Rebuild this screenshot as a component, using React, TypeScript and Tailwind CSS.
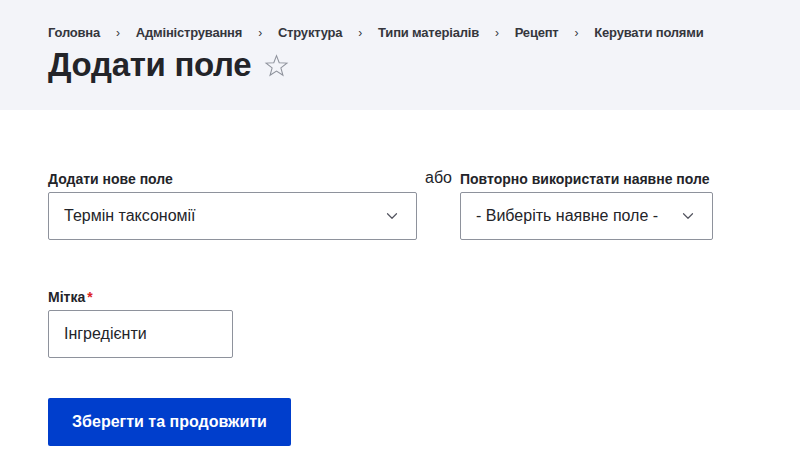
import { ChevronDown } from "lucide-react";

const crumbs = ["Головна", "Адміністрування", "Структура", "Типи матеріалів", "Рецепт", "Керувати полями"];
const font = { fontFamily: '"Liberation Sans", Arial, sans-serif' };

function Select({ value, width }: { value: string; width: string }) {
  return (
    <div className={`flex h-12 items-center justify-between rounded-[2px] border border-[#8e929c] bg-white pl-[15px] pr-[15px] text-base text-[#232429] ${width}`}>
      <span>{value}</span>
      <ChevronDown className="h-[18px] w-[18px] text-[#545560]" strokeWidth={1.6} />
    </div>
  );
}

function Label({ children, required = false }: { children: string; required?: boolean }) {
  return (
    <p className="mb-1 text-sm leading-[18px] font-bold text-[#232429]">
      {children}
      {required && <span className="ml-0.5 text-[#dc2323]">*</span>}
    </p>
  );
}

export default function App() {
  return (
    <div className="min-h-[449px] bg-white" style={font}>
      {/* header */}
      <header className="h-[110px] bg-[#f3f4f9] px-12 pt-[24px]">
        <nav className="flex items-center text-[13px] leading-[18px] font-bold tracking-[-0.2px] text-[#35363d]">
          {crumbs.map((c, i) => (
            <span key={c} className="flex items-center">
              {i > 0 && <span className="px-[16px] text-[12px] font-normal">›</span>}
              {c}
            </span>
          ))}
        </nav>
        <div className="mt-[3px] flex items-center gap-[13px]">
          <h1 className="text-[33px] leading-[40px] font-bold tracking-[-0.3px] text-[#232429]">Додати поле</h1>
          <svg width="25" height="25" viewBox="0 0 24 24" fill="none" stroke="#8e929c" strokeWidth="1" strokeLinejoin="miter">
            <path d="M12 2.5l2.6 6.9 7.4.3-5.8 4.6 2 7.1L12 17.3l-6.2 4.1 2-7.1L2 9.7l7.4-.3z" />
          </svg>
        </div>
      </header>

      {/* form */}
      <main className="px-12 pt-[60px]">
        <div className="flex items-start gap-2">
          <div>
            <Label>Додати нове поле</Label>
            <Select value="Термін таксономії" width="w-[369px]" />
          </div>
          <span className="-mt-[1px] text-base leading-[18px] text-[#232429]">або</span>
          <div>
            <Label>Повторно використати наявне поле</Label>
            <Select value="- Виберіть наявне поле -" width="w-[253px]" />
          </div>
        </div>

        <div className="mt-12">
          <Label required>Мітка</Label>
          <div className="flex h-12 w-[185px] items-center rounded-[2px] border border-[#8e929c] pl-[15px] text-base text-[#232429]">Інгредієнти</div>
        </div>

        <button className="mt-10 h-12 w-[243px] rounded-[2px] bg-[#003ecc] text-base font-bold text-white">Зберегти та продовжити</button>
      </main>
    </div>
  );
}
